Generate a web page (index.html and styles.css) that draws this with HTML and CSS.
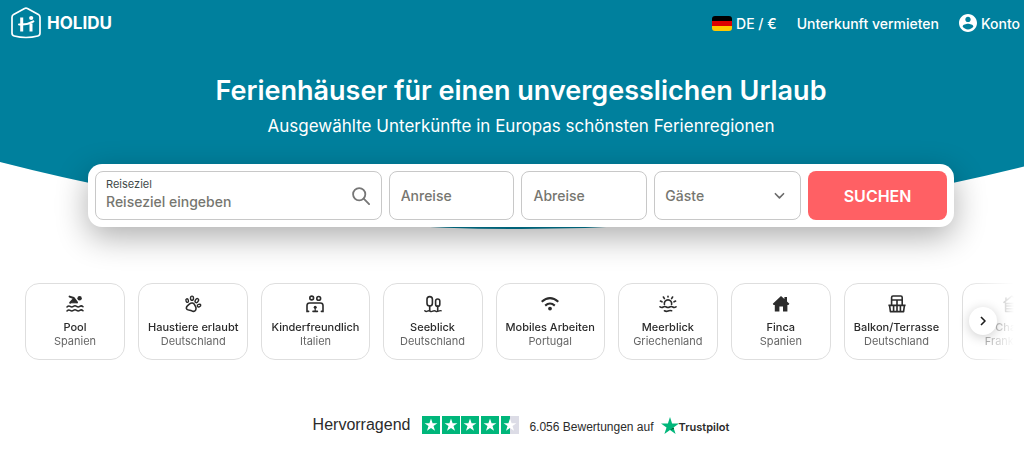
FILE: index.html
```html
<!DOCTYPE html>
<html lang="de">
<head>
    <meta charset="UTF-8">
    <meta name="viewport" content="width=device-width, initial-scale=1.0">
    <title>Holidu</title>
    <link rel="stylesheet" href="styles.css">
</head>
<body>
    <div class="page">
        <!-- Header and hero -->
        <div class="hero">
            <header class="header">
                <a class="logo" href="#">
                    <svg width="30" height="32" viewBox="0 0 30 32" fill="none" stroke="#fff" stroke-linecap="round">
                        <path stroke-width="1.7" stroke-linejoin="round" d="M13.6 1.4Q15 .7 16.4 1.4L27.4 7.4Q29 8.4 29 10.2V26Q29 28.4 26.8 29Q15 32 3.2 29Q1 28.4 1 26V10.2Q1 8.4 2.6 7.4Z"/>
                        <path stroke-width="3" stroke-linecap="butt" d="M10.7 10.5V24.5M20 16.5V24.5"/>
                        <path stroke-width="2" d="M8 17.4Q16 18.2 22.4 14.4"/>
                        <circle cx="20.2" cy="11" r="2.1" fill="#fff" stroke="none"/>
                    </svg>
                    <span>HOLIDU</span>
                </a>
                <nav class="nav">
                    <a class="nav-lang" href="#">
                        <svg width="20" height="15" viewBox="0 0 20 15">
                            <clipPath id="flag"><rect width="20" height="15" rx="3"/></clipPath>
                            <g clip-path="url(#flag)">
                                <path fill="#000" d="M0 0H20V5H0Z"/>
                                <path fill="#d00" d="M0 5H20V10H0Z"/>
                                <path fill="#ffc800" d="M0 10H20V15H0Z"/>
                            </g>
                        </svg>
                        DE / €
                    </a>
                    <a href="#">Unterkunft vermieten</a>
                    <a class="nav-account" href="#">
                        <svg width="18" height="18" viewBox="2 2 20 20" fill="#fff">
                            <path d="M12 2C6.48 2 2 6.48 2 12s4.48 10 10 10 10-4.48 10-10S17.52 2 12 2zm0 3c1.66 0 3 1.34 3 3s-1.34 3-3 3-3-1.34-3-3 1.34-3 3-3zm0 14.2c-2.5 0-4.71-1.28-6-3.22.03-1.99 4-3.08 6-3.08 1.99 0 5.97 1.09 6 3.08-1.29 1.94-3.5 3.22-6 3.22z"/>
                        </svg>
                        Konto
                    </a>
                </nav>
            </header>
            <h1>Ferienhäuser für einen unvergesslichen Urlaub</h1>
            <p class="subtitle">Ausgewählte Unterkünfte in Europas schönsten Ferienregionen</p>
        </div>
        <svg class="curve" viewBox="0 0 100 67" preserveAspectRatio="none">
            <path fill="#00809d" d="M0 0Q50 134 100 0Z"/>
        </svg>

        <!-- Search -->
        <form class="search">
            <div class="field field-destination">
                <div class="field-text">
                    <label for="destination">Reiseziel</label>
                    <input type="text" id="destination" placeholder="Reiseziel eingeben">
                </div>
                <svg width="18" height="18" viewBox="0 0 20 20" fill="none" stroke="#767676" stroke-width="2" stroke-linecap="round">
                    <circle cx="8" cy="8" r="6.8"/>
                    <path d="M13 13L19 19"/>
                </svg>
            </div>
            <input class="field" type="text" placeholder="Anreise" aria-label="Anreise">
            <input class="field" type="text" placeholder="Abreise" aria-label="Abreise">
            <div class="field field-guests">
                <select aria-label="Gäste">
                    <option>Gäste</option>
                </select>
                <svg width="12" height="8" viewBox="0 0 12 8" fill="none" stroke="#6b6b6b" stroke-width="1.8" stroke-linecap="round" stroke-linejoin="round">
                    <path d="M1.5 1.5L6 6L10.5 1.5"/>
                </svg>
            </div>
            <button type="submit">SUCHEN</button>
        </form>

        <!-- Categories -->
        <div class="categories">
            <div class="category-list">
                <a class="category" href="#">
                    <svg viewBox="0 0 18 18" fill="none" stroke="#2b2b2b" stroke-width="1.5" stroke-linecap="round" stroke-linejoin="round">
                        <circle cx="13.6" cy="3.2" r="2.2" fill="#2b2b2b" stroke="none"/>
                        <path stroke-width="2" d="M3.6 1.6L7.8 3L11 7.4M8 3.8L4.2 7.8"/>
                        <path fill="#2b2b2b" stroke-width="1" d="M8.2 4.4L10.6 7.8H5.6Z"/>
                        <path d="M1 12Q2.6 10.2 4.2 11.4T7.4 11.4T10.6 11.4T13.8 11.4T17 11.8M1 16Q2.6 14.2 4.2 15.4T7.4 15.4T10.6 15.4T13.8 15.4T17 15.8"/>
                    </svg>
                    <strong>Pool</strong>
                    <span>Spanien</span>
                </a>
                <a class="category" href="#">
                    <svg viewBox="0 0 18 18" fill="none" stroke="#2b2b2b" stroke-width="1.4" stroke-linejoin="round">
                        <ellipse cx="3.2" cy="5.6" rx="1.2" ry="1.8" transform="rotate(-18 3.2 5.6)"/>
                        <ellipse cx="8" cy="3.2" rx="1.5" ry="2.1"/>
                        <ellipse cx="12.8" cy="5.6" rx="1.5" ry="2.2" transform="rotate(32 12.8 5.6)"/>
                        <ellipse cx="15" cy="10.6" rx="1.2" ry="1.8" transform="rotate(72 15 10.6)"/>
                        <path stroke-width="1.6" d="M5.6 8.8C7.6 7.2 9.8 8 10.6 9.8C11.2 11.4 12.4 11.8 12 14C11.6 16.6 9.2 16.8 7.8 15.8C6.4 14.8 4.6 15.6 3 14.4C1 12.4 3.8 10.4 5.6 8.8Z"/>
                    </svg>
                    <strong>Haustiere erlaubt</strong>
                    <span>Deutschland</span>
                </a>
                <a class="category" href="#">
                    <svg viewBox="0 0 18 18" fill="none" stroke="#2b2b2b" stroke-width="1.6" stroke-linecap="round">
                        <circle cx="5.7" cy="3" r="1.9"/>
                        <circle cx="12.7" cy="3.4" r="1.9"/>
                        <path d="M2.6 16.4H1V10.6Q1 8 3.6 8H14.4Q17 8 17 10.6V16.4H15.4M7 16.4H11.4"/>
                        <circle cx="9.2" cy="12.2" r="1.5" fill="#2b2b2b" stroke="none"/>
                        <path stroke-width="1.2" d="M9.2 13V16"/>
                    </svg>
                    <strong>Kinderfreundlich</strong>
                    <span>Italien</span>
                </a>
                <a class="category" href="#">
                    <svg viewBox="0 0 18 18" fill="none" stroke="#2b2b2b" stroke-width="1.6" stroke-linecap="round" stroke-linejoin="round">
                        <rect x="3" y="1.6" width="5.4" height="9.4" rx="2.7"/>
                        <rect x="11.6" y="4" width="4.2" height="7.4" rx="2.1"/>
                        <path d="M5.7 11V15.4M13.7 11V15.4"/>
                        <path stroke-width="1.4" d="M.8 15.8Q2 17 3.4 16.2T6 16.2T8.8 16.2T11.6 16.2T14.4 16.2T17.2 15.8"/>
                    </svg>
                    <strong>Seeblick</strong>
                    <span>Deutschland</span>
                </a>
                <a class="category" href="#">
                    <svg viewBox="0 0 18 18" fill="none" stroke="#2b2b2b" stroke-width="2.1">
                        <path d="M.7 6.8Q9 -.4 17.3 6.8M4.2 10.6Q9 6.4 13.8 10.6"/>
                        <circle cx="9" cy="13.6" r="1.9" fill="#2b2b2b" stroke="none"/>
                    </svg>
                    <strong>Mobiles Arbeiten</strong>
                    <span>Portugal</span>
                </a>
                <a class="category" href="#">
                    <svg viewBox="0 0 18 18" fill="none" stroke="#2b2b2b" stroke-width="1.6" stroke-linecap="round">
                        <path d="M5.4 9.4A3.7 3.7 0 1 1 12.6 9.4"/>
                        <path d="M9 1.2V2M4.4 2L5.4 3.6M13.6 2L12.6 3.6M1.4 6L3 6.8M16.6 6L15 6.8"/>
                        <path d="M1 11.8Q2.6 13 4.2 12T7.4 12T10.6 12T13.8 12T17 11.8M5.4 15.8Q7.2 16.8 9 16T12.6 15.8"/>
                    </svg>
                    <strong>Meerblick</strong>
                    <span>Griechenland</span>
                </a>
                <a class="category" href="#">
                    <svg viewBox="0 0 18 18" fill="#2b2b2b">
                        <path d="M9 1L12.4 4V2H15V6.4L17.4 8.8L16.4 10H15.4V16.6H11V11.4H7.4V16.6H2.8V10H1.6L.8 8.8Z"/>
                    </svg>
                    <strong>Finca</strong>
                    <span>Spanien</span>
                </a>
                <a class="category" href="#">
                    <svg viewBox="0 0 18 18" fill="none" stroke="#2b2b2b" stroke-width="1.6" stroke-linejoin="round">
                        <path d="M3.6 10V2.4Q3.6 1 5 1H12.8Q14.2 1 14.2 2.4V10M3.6 5H14.2M9 5V10"/>
                        <path d="M.4 10.4H17.6M1.6 10.4L2.4 16.6H15.6L16.4 10.4M5.6 10.4V16M9 10.4V16M12.4 10.4V16"/>
                    </svg>
                    <strong>Balkon/Terrasse</strong>
                    <span>Deutschland</span>
                </a>
                <a class="category" href="#">
                    <svg viewBox="0 0 18 18" fill="none" stroke="#2b2b2b" stroke-width="1.5" stroke-linecap="round" stroke-linejoin="round">
                        <path d="M1 7.4L9 1L17 7.4M3 3V5.4M2.6 8V16.6H15.4V8M2.6 8.4H15.4M2.6 11H15.4M2.6 13.8H15.4"/>
                    </svg>
                    <strong>Chalet</strong>
                    <span>Frankreich</span>
                </a>
            </div>
            <button class="next" type="button" aria-label="Weiter">
                <svg width="8" height="10" viewBox="0 0 8 10" fill="none" stroke="#1c1c1c" stroke-width="1.6" stroke-linejoin="round">
                    <path d="M2 1L6 5L2 9"/>
                </svg>
            </button>
        </div>

        <!-- Rating -->
        <div class="rating">
            <span class="rating-label">Hervorragend</span>
            <svg width="97" height="18" viewBox="0 0 97 18">
                <defs>
                    <path id="star" d="M9 2.6L10.6 7.2H15.4L11.5 10.1L13 14.8L9 11.9L5 14.8L6.5 10.1L2.6 7.2H7.4Z"/>
                </defs>
                <path fill="#00b67a" d="M0 0H18V18H0ZM20 0H38V18H20ZM39 0H57V18H39ZM59 0H77V18H59ZM79 0H88V18H79Z"/>
                <path fill="#dcdce6" d="M88 0H97V18H88Z"/>
                <g fill="#fff">
                    <use href="#star"/>
                    <use href="#star" x="20"/>
                    <use href="#star" x="39"/>
                    <use href="#star" x="59"/>
                    <use href="#star" x="79"/>
                </g>
            </svg>
            <span class="rating-count">6.056 Bewertungen auf</span>
            <a class="trustpilot" href="#">
                <svg width="18" height="17" viewBox="0 0 18 17">
                    <path fill="#00b67a" d="M9 0L11.1 6.4H18L12.5 10.4L14.6 17L9 13L3.4 17L5.5 10.4L0 6.4H6.9Z"/>
                    <path fill="#005128" d="M13 11.9L12.5 10.4L9 13Z"/>
                </svg>
                <span>Trustpilot</span>
            </a>
        </div>
    </div>
</body>
</html>
```
FILE: styles.css
```css
* {
    margin: 0;
    padding: 0;
    box-sizing: border-box;
}

body {
    background: #fff;
    color: #2b2b2b;
    font-family: Inter, 'Liberation Sans', sans-serif;
    overflow-x: hidden;
}

a {
    color: inherit;
    text-decoration: none;
}

input, select, button {
    font-family: inherit;
    border: none;
    background: none;
    outline: none;
}

/* the page runs a little wider than the window */
.page {
    width: calc(100% + 18px);
}

/* Header */
.hero {
    background: #00809d;
    color: #fff;
    text-align: center;
    padding-bottom: 24px;
}

.header {
    display: flex;
    justify-content: space-between;
    align-items: center;
    height: 46px;
    padding: 0 22px 0 11px;
}

.logo {
    display: flex;
    align-items: center;
    gap: 6px;
    font-size: 17px;
    font-weight: 700;
}

.nav {
    display: flex;
    align-items: center;
    gap: 20px;
    font-size: 14px;
    font-weight: 500;
}

.nav-lang, .nav-account {
    display: flex;
    align-items: center;
    gap: 4px;
}

h1 {
    margin-top: 28px;
    font-size: 27px;
    font-weight: 600;
    line-height: 34px;
}

.subtitle {
    margin-top: 6px;
    font-size: 17px;
    line-height: 24px;
}

.curve {
    display: block;
    width: 100%;
    height: 67px;
}

/* Search */
.search {
    position: relative;
    display: grid;
    grid-template-columns: 287fr 126fr 126fr 147fr 139fr;
    gap: 7px;
    max-width: 866px;
    margin: -65px auto 0;
    padding: 7px;
    background: #fff;
    border-radius: 14px;
    box-shadow: 0 10px 32px rgba(0, 0, 0, 0.32);
}

.field {
    display: flex;
    align-items: center;
    min-width: 0;
    height: 49px;
    padding: 0 11px;
    border: 1px solid #c8c8c8;
    border-radius: 8px;
    color: #767670;
    font-size: 14px;
    font-weight: 500;
}

.field-destination, .field-guests {
    padding-left: 10px;
}

.field-text {
    flex: 1;
    display: flex;
    flex-direction: column;
    padding-bottom: 3px;
}

.field-text label {
    color: #3f4a4a;
    font-size: 11px;
    font-weight: 400;
    line-height: 16px;
}

.field input, .field select {
    width: 100%;
    color: #767670;
    font-size: 14px;
    font-weight: 500;
    line-height: 20px;
}

.field select {
    appearance: none;
}

.field-guests {
    padding-right: 15px;
}

::placeholder {
    color: #767670;
}

.search button {
    background: #ff6064;
    border-radius: 8px;
    color: #fff;
    font-size: 16px;
    font-weight: 600;
}

/* Categories */
.categories {
    position: relative;
    margin: 56px 28px 0 25px;
}

.category-list {
    display: flex;
    gap: 13px;
    overflow: hidden;
    mask-image: linear-gradient(to left, transparent, #000 52px);
}

.category {
    flex: none;
    display: flex;
    flex-direction: column;
    align-items: center;
    min-width: 100px;
    height: 77px;
    padding: 11px 9px 0;
    border: 1px solid #dedede;
    border-radius: 14px;
    font-size: 11px;
    line-height: 14px;
}

.category svg {
    width: 18px;
    height: 18px;
    margin-bottom: 7px;
}

.category strong {
    font-weight: 500;
}

.category span {
    color: #666;
}

.next {
    position: absolute;
    top: 24px;
    right: 17px;
    display: flex;
    align-items: center;
    justify-content: center;
    width: 28px;
    height: 28px;
    background: #fff;
    border-radius: 50%;
    box-shadow: 0 2px 12px rgba(0, 0, 0, 0.2);
}

/* Rating */
.rating {
    display: flex;
    justify-content: center;
    align-items: flex-end;
    margin-top: 56px;
    font-family: 'Liberation Sans', Arial, sans-serif;
}

.rating-label {
    margin-right: 12px;
    font-size: 16px;
}

.rating-count {
    margin: 0 7px 0 10px;
    font-size: 12px;
}

.trustpilot {
    display: flex;
    align-items: flex-end;
    font-family: Inter, sans-serif;
    font-size: 11px;
    font-weight: 600;
}
```
